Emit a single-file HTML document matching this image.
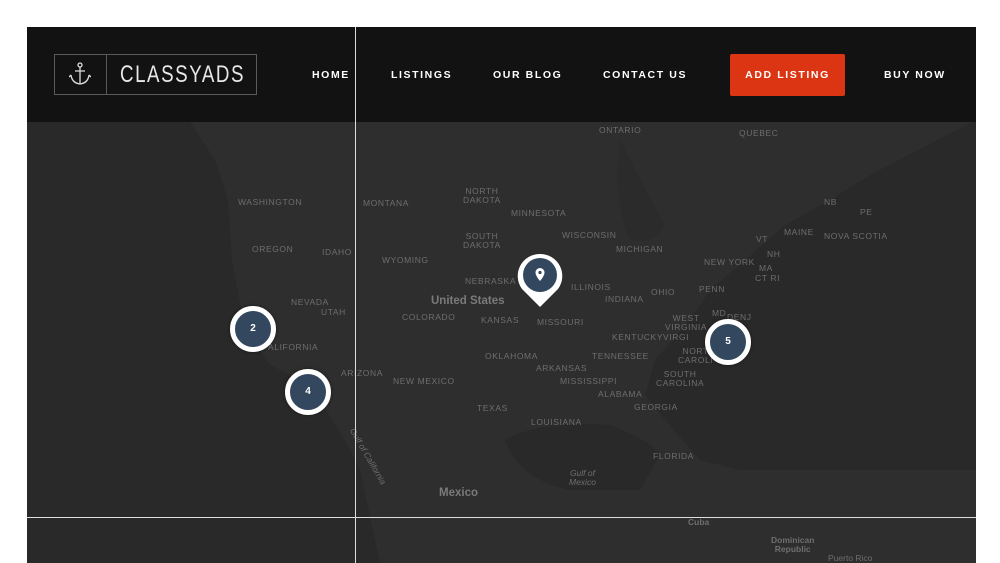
<!DOCTYPE html>
<html><head><meta charset="utf-8"><style>
*{margin:0;padding:0;box-sizing:border-box}
body{width:1000px;height:563px;background:#fff;position:relative;overflow:hidden;font-family:"Liberation Sans",Arial,sans-serif}
#map{position:absolute;left:27px;top:27px;width:949px;height:536px;background:#292929;overflow:hidden}
#labels{position:absolute;left:0;top:0;width:1000px;height:563px}
.l{position:absolute;color:#6e6e6e;font-size:8.5px;letter-spacing:.6px;line-height:9px;text-align:center;white-space:nowrap}
.big{font-size:11.5px;font-weight:bold;letter-spacing:0;color:#7a7a7a}
#hdr{position:absolute;left:27px;top:27px;width:949px;height:95px;background:rgba(17,17,17,.94)}
.logo{position:absolute;left:27px;top:27px;width:203px;height:41px;border:1px solid #5a5a5a}
.logo .sep{position:absolute;left:51px;top:0;width:1px;height:39px;background:#5a5a5a}
.logo .t{position:absolute;left:65px;top:6px;font-size:24px;color:#e8e8e8;letter-spacing:2px;font-family:"Liberation Sans Narrow","Liberation Sans",sans-serif;transform:scaleX(.78);transform-origin:left;font-weight:300}
.nav{position:absolute;top:69px;color:#fff;font-size:10.5px;font-weight:bold;letter-spacing:1.6px}
.btn{position:absolute;left:730px;top:54px;width:115px;height:42px;background:#dc3513;border-radius:2px;color:#fff;font-size:10.5px;font-weight:bold;letter-spacing:1.6px;text-align:center;line-height:42px}
.vl{position:absolute;left:355px;top:27px;width:1px;height:536px;background:#ddd}
.hl{position:absolute;left:27px;top:517px;width:949px;height:1px;background:#ddd}
.c{position:absolute;width:46px;height:46px;border-radius:50%;background:#33475e;border:5px solid #fff;color:#fff;font-size:10px;font-weight:bold;text-align:center;line-height:36px;box-shadow:0 0 3px rgba(0,0,0,.5)}
</style></head><body>
<div id="map">
<svg width="1000" height="563" style="position:absolute;left:-27px;top:-27px">
<path d="M190 122 L215 160 L228 200 L232 260 L245 330 L270 365 L310 385 L345 440 L360 470 L380 563 L976 563 L976 470 L740 470 L700 460 L665 420 L645 395 L655 360 L690 320 L710 290 L745 260 L785 225 L830 200 L870 175 L976 120 L976 122 Z" fill="#2e2e2e"/>
<path d="M505 440 Q540 420 610 425 Q650 440 660 455 L640 490 L570 490 Q520 480 505 440Z" fill="#292929"/>
<path d="M620 140 Q645 190 665 225 Q655 245 630 240 Q612 200 620 140Z" fill="#2b2b2b"/>
</svg>
</div>
<div id="labels">
<div class="l" style="left:463px;top:187px">NORTH<br>DAKOTA</div>
<div class="l" style="left:511px;top:209px">MINNESOTA</div>
<div class="l" style="left:238px;top:198px">WASHINGTON</div>
<div class="l" style="left:363px;top:199px">MONTANA</div>
<div class="l" style="left:463px;top:232px">SOUTH<br>DAKOTA</div>
<div class="l" style="left:562px;top:231px">WISCONSIN</div>
<div class="l" style="left:616px;top:245px">MICHIGAN</div>
<div class="l" style="left:252px;top:245px">OREGON</div>
<div class="l" style="left:322px;top:248px">IDAHO</div>
<div class="l" style="left:382px;top:256px">WYOMING</div>
<div class="l" style="left:704px;top:258px">NEW YORK</div>
<div class="l" style="left:465px;top:277px">NEBRASKA</div>
<div class="l" style="left:571px;top:283px">ILLINOIS</div>
<div class="l" style="left:651px;top:288px">OHIO</div>
<div class="l" style="left:699px;top:285px">PENN</div>
<div class="l" style="left:605px;top:295px">INDIANA</div>
<div class="l big" style="left:431px;top:297px">United States</div>
<div class="l" style="left:291px;top:298px">NEVADA</div>
<div class="l" style="left:321px;top:308px">UTAH</div>
<div class="l" style="left:402px;top:313px">COLORADO</div>
<div class="l" style="left:481px;top:316px">KANSAS</div>
<div class="l" style="left:537px;top:318px">MISSOURI</div>
<div class="l" style="left:665px;top:314px">WEST<br>VIRGINIA</div>
<div class="l" style="left:712px;top:309px">MD</div>
<div class="l" style="left:727px;top:313px">DENJ</div>
<div class="l" style="left:612px;top:333px">KENTUCKY</div>
<div class="l" style="left:663px;top:333px">VIRGI</div>
<div class="l" style="left:268px;top:343px">ALIFORNIA</div>
<div class="l" style="left:485px;top:352px">OKLAHOMA</div>
<div class="l" style="left:592px;top:352px">TENNESSEE</div>
<div class="l" style="left:678px;top:347px">NORT<br>CAROLI</div>
<div class="l" style="left:341px;top:369px">ARIZONA</div>
<div class="l" style="left:536px;top:364px">ARKANSAS</div>
<div class="l" style="left:393px;top:377px">NEW MEXICO</div>
<div class="l" style="left:560px;top:377px">MISSISSIPPI</div>
<div class="l" style="left:656px;top:370px">SOUTH<br>CAROLINA</div>
<div class="l" style="left:598px;top:390px">ALABAMA</div>
<div class="l" style="left:634px;top:403px">GEORGIA</div>
<div class="l" style="left:477px;top:404px">TEXAS</div>
<div class="l" style="left:531px;top:418px">LOUISIANA</div>
<div class="l" style="left:653px;top:452px">FLORIDA</div>
<div class="l" style="left:569px;top:469px;font-style:italic;letter-spacing:0">Gulf of<br>Mexico</div>
<div class="l big" style="left:439px;top:489px">Mexico</div>
<div class="l" style="left:599px;top:126px">ONTARIO</div>
<div class="l" style="left:739px;top:129px">QUEBEC</div>
<div class="l" style="left:824px;top:198px">NB</div>
<div class="l" style="left:860px;top:208px">PE</div>
<div class="l" style="left:784px;top:228px">MAINE</div>
<div class="l" style="left:824px;top:232px">NOVA SCOTIA</div>
<div class="l" style="left:756px;top:235px">VT</div>
<div class="l" style="left:767px;top:250px">NH</div>
<div class="l" style="left:759px;top:264px">MA</div>
<div class="l" style="left:755px;top:274px">CT RI</div>
<div class="l" style="left:688px;top:518px;font-weight:bold;letter-spacing:0">Cuba</div>
<div class="l" style="left:771px;top:536px;font-weight:bold;letter-spacing:0">Dominican<br>Republic</div>
<div class="l" style="left:828px;top:554px;letter-spacing:0">Puerto Rico</div>
<div class="l" style="left:336px;top:452px;transform:rotate(60deg);font-style:italic;letter-spacing:0">Gulf of California</div>
</div>
<div id="hdr">
<div class="logo"><div class="sep"></div>
<svg width="22" height="24" style="position:absolute;left:14px;top:7px" viewBox="0 0 22 24" fill="none" stroke="#ddd" stroke-width="1.3"><circle cx="11" cy="3" r="2"/><path d="M11 5V22M6 9H16M2 13Q3 21 11 22Q19 21 20 13M2 13L0 15M20 13L22 15"/></svg>
<div class="t">CLASSYADS</div></div>
</div>
<div class="nav" style="left:312px">HOME</div>
<div class="nav" style="left:391px">LISTINGS</div>
<div class="nav" style="left:493px">OUR BLOG</div>
<div class="nav" style="left:603px">CONTACT US</div>
<div class="btn">ADD LISTING</div>
<div class="nav" style="left:884px">BUY NOW</div>
<div class="vl"></div><div class="hl"></div>
<div class="c" style="left:230px;top:306px">2</div>
<div class="c" style="left:285px;top:369px">4</div>
<div class="c" style="left:705px;top:319px">5</div>
<svg width="48" height="56" style="position:absolute;left:516px;top:252px" viewBox="0 0 48 56"><path d="M24 2A22 22 0 0 1 42 37L24 55L6 37A22 22 0 0 1 24 2Z" fill="#fff"/><circle cx="24" cy="23" r="17" fill="#33475e"/><path d="M24 16a4.5 4.5 0 0 0-4.5 4.5c0 3.5 4.5 8.5 4.5 8.5s4.5-5 4.5-8.5A4.5 4.5 0 0 0 24 16z" fill="#fff"/><circle cx="24" cy="20.5" r="1.6" fill="#33475e"/></svg>
</body></html>
